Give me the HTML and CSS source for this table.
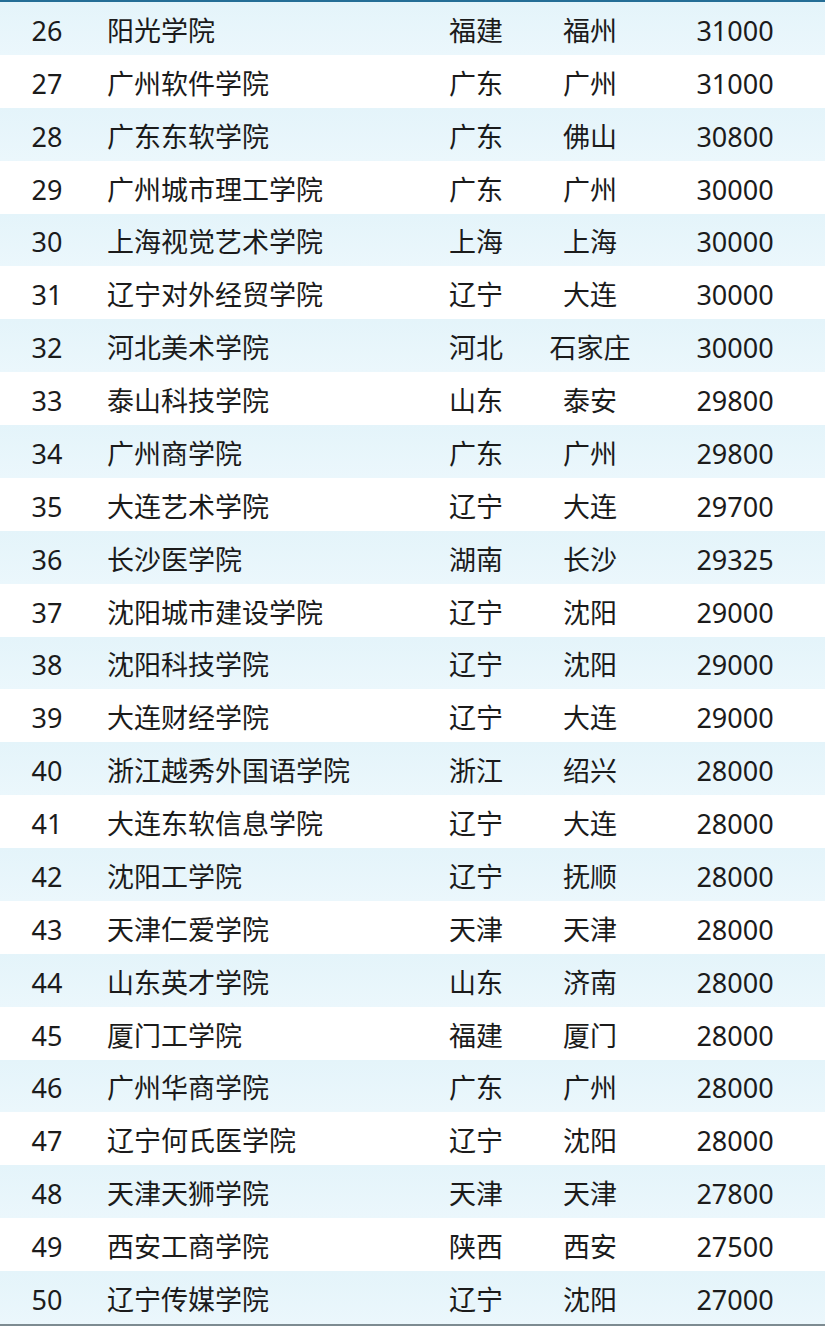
FILE: index.html
```html
<!DOCTYPE html>
<html lang="zh-CN">
<head>
<meta charset="utf-8">
<link rel="stylesheet" href="styles.css">
</head>
<body>
<div class="table">
  <div class="row alt"><span class="rank">26</span><span class="name">阳光学院</span><span class="prov">福建</span><span class="city">福州</span><span class="fee">31000</span></div>
  <div class="row"><span class="rank">27</span><span class="name">广州软件学院</span><span class="prov">广东</span><span class="city">广州</span><span class="fee">31000</span></div>
  <div class="row alt"><span class="rank">28</span><span class="name">广东东软学院</span><span class="prov">广东</span><span class="city">佛山</span><span class="fee">30800</span></div>
  <div class="row"><span class="rank">29</span><span class="name">广州城市理工学院</span><span class="prov">广东</span><span class="city">广州</span><span class="fee">30000</span></div>
  <div class="row alt"><span class="rank">30</span><span class="name">上海视觉艺术学院</span><span class="prov">上海</span><span class="city">上海</span><span class="fee">30000</span></div>
  <div class="row"><span class="rank">31</span><span class="name">辽宁对外经贸学院</span><span class="prov">辽宁</span><span class="city">大连</span><span class="fee">30000</span></div>
  <div class="row alt"><span class="rank">32</span><span class="name">河北美术学院</span><span class="prov">河北</span><span class="city">石家庄</span><span class="fee">30000</span></div>
  <div class="row"><span class="rank">33</span><span class="name">泰山科技学院</span><span class="prov">山东</span><span class="city">泰安</span><span class="fee">29800</span></div>
  <div class="row alt"><span class="rank">34</span><span class="name">广州商学院</span><span class="prov">广东</span><span class="city">广州</span><span class="fee">29800</span></div>
  <div class="row"><span class="rank">35</span><span class="name">大连艺术学院</span><span class="prov">辽宁</span><span class="city">大连</span><span class="fee">29700</span></div>
  <div class="row alt"><span class="rank">36</span><span class="name">长沙医学院</span><span class="prov">湖南</span><span class="city">长沙</span><span class="fee">29325</span></div>
  <div class="row"><span class="rank">37</span><span class="name">沈阳城市建设学院</span><span class="prov">辽宁</span><span class="city">沈阳</span><span class="fee">29000</span></div>
  <div class="row alt"><span class="rank">38</span><span class="name">沈阳科技学院</span><span class="prov">辽宁</span><span class="city">沈阳</span><span class="fee">29000</span></div>
  <div class="row"><span class="rank">39</span><span class="name">大连财经学院</span><span class="prov">辽宁</span><span class="city">大连</span><span class="fee">29000</span></div>
  <div class="row alt"><span class="rank">40</span><span class="name">浙江越秀外国语学院</span><span class="prov">浙江</span><span class="city">绍兴</span><span class="fee">28000</span></div>
  <div class="row"><span class="rank">41</span><span class="name">大连东软信息学院</span><span class="prov">辽宁</span><span class="city">大连</span><span class="fee">28000</span></div>
  <div class="row alt"><span class="rank">42</span><span class="name">沈阳工学院</span><span class="prov">辽宁</span><span class="city">抚顺</span><span class="fee">28000</span></div>
  <div class="row"><span class="rank">43</span><span class="name">天津仁爱学院</span><span class="prov">天津</span><span class="city">天津</span><span class="fee">28000</span></div>
  <div class="row alt"><span class="rank">44</span><span class="name">山东英才学院</span><span class="prov">山东</span><span class="city">济南</span><span class="fee">28000</span></div>
  <div class="row"><span class="rank">45</span><span class="name">厦门工学院</span><span class="prov">福建</span><span class="city">厦门</span><span class="fee">28000</span></div>
  <div class="row alt"><span class="rank">46</span><span class="name">广州华商学院</span><span class="prov">广东</span><span class="city">广州</span><span class="fee">28000</span></div>
  <div class="row"><span class="rank">47</span><span class="name">辽宁何氏医学院</span><span class="prov">辽宁</span><span class="city">沈阳</span><span class="fee">28000</span></div>
  <div class="row alt"><span class="rank">48</span><span class="name">天津天狮学院</span><span class="prov">天津</span><span class="city">天津</span><span class="fee">27800</span></div>
  <div class="row"><span class="rank">49</span><span class="name">西安工商学院</span><span class="prov">陕西</span><span class="city">西安</span><span class="fee">27500</span></div>
  <div class="row alt"><span class="rank">50</span><span class="name">辽宁传媒学院</span><span class="prov">辽宁</span><span class="city">沈阳</span><span class="fee">27000</span></div>
</div>
</body>
</html>
```
FILE: styles.css
```css
html, body {
  margin: 0;
  padding: 0;
  background: #ffffff;
}
body {
  font-family: "Noto Sans", "Noto Sans CJK SC", sans-serif;
  color: #1b1b1b;
}
.table {
  width: 825px;
  border-top: 2px solid #246e96;
  border-bottom: 2px solid #7d8b91;
}
.row {
  display: grid;
  grid-template-columns: 94px 326px 112px 116px 174px;
  height: 52.88px;
  align-items: center;
  font-size: 27px;
  line-height: 1;
  padding-top: 4px;
  box-sizing: border-box;
  background: #ffffff;
}
.row.alt {
  background: linear-gradient(180deg, #e4f4fa 0%, #ebf7fc 100%);
}
.rank {
  text-align: center;
}
.name {
  padding-left: 13px;
  text-align: left;
}
.prov, .city, .fee {
  text-align: center;
}
```
